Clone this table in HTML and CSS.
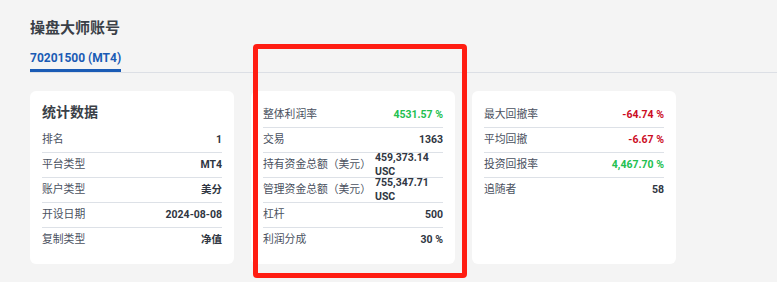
FILE: index.html
```html
<!DOCTYPE html>
<html lang="zh-CN">
<head>
<meta charset="utf-8">
<title>操盘大师账号</title>
<link rel="stylesheet" href="styles.css">
</head>
<body>
<div class="page">
  <h1 class="page-title">操盘大师账号</h1>
  <div class="tabs">
    <div class="tab active">70201500 (MT4)</div>
  </div>
  <div class="cards">
    <section class="card">
      <h2 class="card-title">统计数据</h2>
      <div class="row"><span class="label">排名</span><span class="value">1</span></div>
      <div class="row"><span class="label">平台类型</span><span class="value">MT4</span></div>
      <div class="row"><span class="label">账户类型</span><span class="value">美分</span></div>
      <div class="row"><span class="label">开设日期</span><span class="value">2024-08-08</span></div>
      <div class="row"><span class="label">复制类型</span><span class="value">净值</span></div>
    </section>
    <section class="card">
      <div class="row"><span class="label">整体利润率</span><span class="value pos">4531.57 %</span></div>
      <div class="row"><span class="label">交易</span><span class="value">1363</span></div>
      <div class="row"><span class="label">持有资金总额（美元）</span><span class="value">459,373.14 USC</span></div>
      <div class="row"><span class="label">管理资金总额（美元）</span><span class="value">755,347.71 USC</span></div>
      <div class="row"><span class="label">杠杆</span><span class="value">500</span></div>
      <div class="row"><span class="label">利润分成</span><span class="value">30 %</span></div>
    </section>
    <section class="card">
      <div class="row"><span class="label">最大回撤率</span><span class="value neg">-64.74 %</span></div>
      <div class="row"><span class="label">平均回撤</span><span class="value neg">-6.67 %</span></div>
      <div class="row"><span class="label">投资回报率</span><span class="value pos">4,467.70 %</span></div>
      <div class="row"><span class="label">追随者</span><span class="value">58</span></div>
    </section>
  </div>
</div>
<div class="highlight"></div>
</body>
</html>
```
FILE: styles.css
```css
* { box-sizing: border-box; }
html, body {
  margin: 0;
  padding: 0;
  background: #f4f4f4;
  font-family: "Roboto", "Noto Sans CJK SC", sans-serif;
}
.page {
  padding: 18px 0 0 30px;
}
.page-title {
  margin: 0;
  font-size: 15px;
  line-height: 20px;
  font-weight: 700;
  color: #3a3f47;
}
.tabs {
  margin-top: 12px;
  display: flex;
  border-bottom: 1px solid #dcdfe5;
}
.tab {
  font-size: 12px;
  line-height: 16px;
  font-weight: 700;
  padding-bottom: 3px;
  color: #1a5bb5;
  border-bottom: 3px solid #1a5bb5;
}
.cards {
  margin-top: 18px;
  display: grid;
  grid-template-columns: repeat(3, 204px);
  gap: 17px;
}
.card {
  background: #ffffff;
  border-radius: 6px;
  padding: 12px;
}
.card-title {
  margin: 0 0 7px;
  font-size: 14px;
  line-height: 18px;
  font-weight: 700;
  color: #3a3f47;
}
.row {
  display: flex;
  justify-content: space-between;
  align-items: center;
  gap: 4px;
  height: 25px;
  border-bottom: 1px solid #dde1e7;
  font-size: 11px;
  line-height: 14px;
}
.row:last-child { border-bottom: none; height: 24px; }
.label {
  white-space: nowrap;
  font-size: 10.8px;
  color: #4a5160;
}
.value {
  font-size: 10.5px;
  font-weight: 700;
  color: #2f3642;
}
.value.pos { color: #22c04f; }
.value.neg { color: #cc0c1f; }
.highlight {
  position: absolute;
  left: 253px;
  top: 44px;
  width: 214px;
  height: 234px;
  border: 5px solid #ff1d12;
  border-radius: 4px;
  pointer-events: none;
}
```
